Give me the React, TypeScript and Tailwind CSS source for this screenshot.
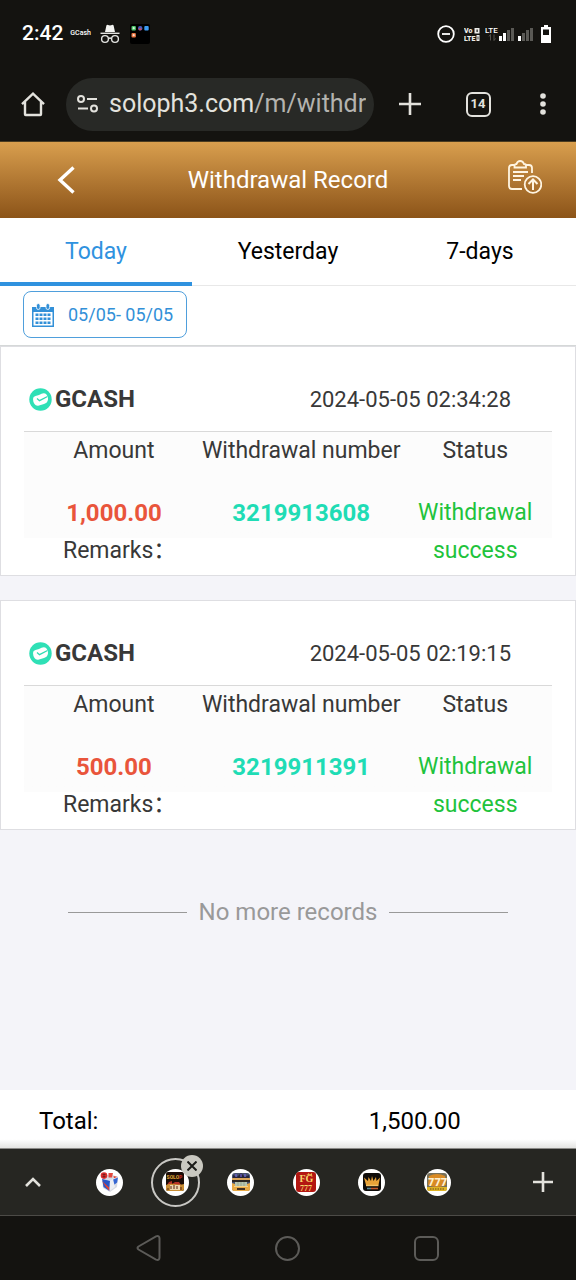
import type { ReactNode } from "react";

interface WithdrawalRecord {
  id: string;
  time: string;
  amount: string;
  status: string;
}

const records: WithdrawalRecord[] = [
  { id: "3219913608", time: "2024-05-05 02:34:28", amount: "1,000.00", status: "Withdrawal success" },
  { id: "3219911391", time: "2024-05-05 02:19:15", amount: "500.00", status: "Withdrawal success" },
];

const ranges = ["Today", "Yesterday", "7-days"];

function StatusBar() {
  return (
    <div className="flex h-[67px] items-center pl-[22px] pr-[25px] text-white">
      <span className="text-[21px] font-medium">2:42</span>
      <span className="ml-[7px] w-5 text-[7px] font-medium">GCash</span>
      <svg className="ml-[10px] h-5 w-5" viewBox="0 0 20 20" fill="none" stroke="#e4e4e2" strokeWidth="1.4">
        <path d="M5 8 6.4 1.4Q7 .6 8 1l2 .6L12 1q1-.4 1.6.4L15 8Z" fill="#f4f4f2" stroke="none" />
        <path d="M.5 9.3h19" />
        <circle cx="5" cy="15" r="3.4" />
        <circle cx="15" cy="15" r="3.4" />
        <path d="M8.4 14.6q1.6-1.2 3.2 0" />
      </svg>
      <svg className="ml-[10px] h-5 w-5" viewBox="0 0 20 20">
        <rect width="20" height="20" rx="2" fill="#000" />
        <rect x="1.5" y="2" width="4.4" height="4.4" rx="1" fill="#4fc56b" />
        <circle cx="3.7" cy="4.2" r="1.1" fill="#d8f4de" />
        <rect x="8" y="2" width="4.4" height="4.4" rx="2" fill="#4658b8" />
        <path d="M8.5 4.6h3.4l-.8 1.6H9z" fill="#d84b54" />
        <rect x="14.3" y="2" width="4.4" height="4.4" rx="1" fill="#3c9bf2" />
        <rect x="1.5" y="9" width="4.4" height="4.4" rx="1" fill="#e8743f" />
        <circle cx="3.7" cy="11.2" r="1.1" fill="#f8ddd0" />
      </svg>

      <div className="ml-auto flex items-center">
        <svg className="h-[18px] w-[18px]" viewBox="0 0 18 18" fill="none" stroke="#fff" strokeWidth="1.8">
          <circle cx="9" cy="9" r="7.8" />
          <path d="M5 9h8" />
        </svg>
        <svg className="ml-[9px] h-4 w-4" viewBox="0 0 16 16" fill="#ecece9" fontSize="7" fontWeight="900">
          <text x="0" y="7">Vo</text>
          <text x="0" y="15">LTE</text>
          <path d="M10.5 2h5v5.500h-5zM12.500 3.600v2.300h1.200V3.600zM12.500 9h3v6h-3zM13.600 10.500v3h.8v-3z" fillRule="evenodd" />
        </svg>
        <svg className="ml-[5px] h-[18px] w-12" viewBox="0 0 48 18">
          <text x="0" y="8" fontSize="8" fontWeight="500" fill="#fff">LTE</text>
          <path d="M5.5 9.5v6M4 11.500l1.500-2M9 9.500v6M9 15.500l1.500-2" stroke="#55534f" fill="none" />
          <path d="M14 11h3v5h-3zM18 8h3v8h-3zM33 11h3v5h-3z" fill="#fff" />
          <path d="M22 5h3v11h-3zM26 3h3v13h-3zM37 8h3v8h-3zM41 5h3v11h-3zM45 3h3v13h-3z" fill="#5a5955" />
        </svg>
        <svg className="ml-2 h-[18px] w-[10px]" viewBox="0 0 10 18" fill="#fff">
          <path d="M3 0h4v2h3v16H0V2h3zM2 4.500v5.500h6V4.500z" fillRule="evenodd" />
        </svg>
      </div>
    </div>
  );
}

function BrowserBar() {
  return (
    <div className="flex h-[74px] items-center text-[#e3e2dd]">
      <button aria-label="Home" className="flex w-[66px] justify-center">
        <svg className="h-[26px] w-[26px]" viewBox="0 0 26 26" fill="none" stroke="currentColor" strokeWidth="2.4">
          <path d="M2 13.200 13 2.600l11 10.600" />
          <path d="M5 11v12.300q0 .7.7.7h14.600q.7 0 .7-.7V11" />
        </svg>
      </button>
      <button className="flex h-[53px] min-w-0 flex-1 items-center rounded-full bg-[#282926] pl-[11px] pr-[6px]">
        <svg className="h-5 w-[21px] shrink-0" viewBox="0 0 21 20" fill="none" stroke="currentColor" strokeWidth="2">
          <circle cx="4" cy="5" r="3" />
          <path d="M10 5h10M1 14.500h10" />
          <circle cx="17" cy="14.5" r="3" />
        </svg>
        <span className="ml-[11px] overflow-hidden whitespace-nowrap text-[25px]">
          soloph3.com<span className="text-[#b4b3af]">/m/withdr</span>
        </span>
      </button>
      <button aria-label="New tab" className="flex w-[72px] justify-center">
        <svg className="h-[22px] w-[22px]" viewBox="0 0 22 22" stroke="currentColor" strokeWidth="2.6">
          <path d="M11 0v22M0 11h22" />
        </svg>
      </button>
      <button aria-label="Open tabs" className="flex w-16 justify-center">
        <span className="flex h-[25px] w-[25px] items-center justify-center rounded-md border-2 border-current text-[13px] font-bold">
          14
        </span>
      </button>
      <button aria-label="Menu" className="flex w-[66px] justify-center">
        <svg className="h-[22px] w-[6px]" viewBox="0 0 6 22" fill="currentColor">
          <circle cx="3" cy="3" r="2.8" />
          <circle cx="3" cy="11" r="2.8" />
          <circle cx="3" cy="19" r="2.8" />
        </svg>
      </button>
    </div>
  );
}

function PageHeader() {
  return (
    <header className="flex h-[77px] items-center border-t border-[#4a3b20] bg-linear-to-b from-[#d99f4e] to-[#8c5418] text-white">
      <button aria-label="Back" className="flex w-[132px] justify-center">
        <svg className="h-7 w-[18px]" viewBox="0 0 18 28" fill="none" stroke="currentColor" strokeWidth="3.4">
          <path d="M16.500 1.500 3 14l13.500 12.500" />
        </svg>
      </button>
      <h1 className="flex-1 text-center text-[24px]">Withdrawal Record</h1>
      <button aria-label="Withdraw" className="flex w-[132px] justify-end pb-[6px] pr-[34px]">
        <svg className="h-[34px] w-[34px]" viewBox="0 0 34 34" fill="none" stroke="#fff5e2" strokeWidth="1.8">
          <path d="M6 5H4Q1 5 1 8v18q0 3 3 3h10M18 5h3q3 0 3 3v5" />
          <path d="M6.500 7.500V5.500Q6.500 4 8.500 4 9.500 1 12.200 1T16 4q2 0 2 1.500v2z" />
          <path d="M5 12h15M5 16h11M5 20h8" />
          <circle cx="25" cy="24.5" r="8.3" />
          <path d="M25 30V20M20.500 24l4.500-4.500 4.500 4.500" strokeWidth="2" />
        </svg>
      </button>
    </header>
  );
}

function RangeTabs() {
  return (
    <nav className="grid grid-cols-3 border-b border-[#e8e8e8] bg-white">
      {ranges.map((label, i) => (
        <button
          key={label}
          className={`-mb-px h-[68px] border-b-4 pt-1 text-[23px] ${
            i === 0 ? "border-[#2f92df] text-[#2f92df]" : "border-transparent text-black"
          }`}
        >
          {label}
        </button>
      ))}
    </nav>
  );
}

function DateFilter() {
  return (
    <div className="border-b border-[#d5d8d8] bg-white px-[23px] pb-[7px] pt-[5px]">
      <button className="flex h-[47px] items-center rounded-lg border border-[#4f9fdc] pl-2 pr-[13px] text-[18px] text-[#3290d8]">
        <svg className="mr-[14px] h-6 w-[22px]" viewBox="0 0 22 24" fill="currentColor">
          <path d="M0 4h22v20H0zM1.500 9v13.500h19V9z" fillRule="evenodd" />
          <g stroke="#fff" strokeWidth=".8">
            <rect x="4.5" y=".5" width="3.6" height="6" rx="1.8" />
            <rect x="14" y=".5" width="3.6" height="6" rx="1.8" />
          </g>
          <path d="M7.500 10.500h3v2.500h-3zM11.500 10.500h3v2.500h-3zM15.500 10.500h3v2.500h-3zM3.500 14.500h3V17h-3zM7.500 14.500h3V17h-3zM11.500 14.500h3V17h-3zM15.500 14.500h3V17h-3zM3.500 18.500h3V21h-3zM7.500 18.500h3V21h-3zM11.500 18.500h3V21h-3zM3.500 10.500h3v2.500h-3zM15.500 18.500h3V21h-3z" />
        </svg>
        05/05- 05/05
      </button>
    </div>
  );
}

function RecordCard({ record }: { record: WithdrawalRecord }) {
  return (
    <article className="border border-[#dedee2] bg-white px-[23px] pb-[5px] pt-5 text-[#383838]">
      <div className="flex h-[65px] items-center border-b border-[#d9d9d9] pl-[5px] pr-[41px]">
        <svg className="h-[23px] w-[23px]" viewBox="0 0 23 23">
          <circle cx="11.5" cy="11.5" r="11.2" fill="#2fe0b6" />
          <path d="M4 11q0-2.500 2.500-3L10 7q5-3 7.500-.5 1.800 2 1.500 5-.5 3.500-4 4.500l-5 1.500q-3 .8-4.500-1.500T4 11z" fill="#fff" />
          <path d="m8 10.500 2.500 2.200L18.500 8.500" fill="none" stroke="#2fdcb3" strokeWidth="1.3" />
        </svg>
        <h2 className="ml-[3px] text-[24px] font-bold">GCASH</h2>
        <time className="ml-auto text-[22px]">{record.time}</time>
      </div>
      <table className="w-full table-fixed bg-linear-to-b from-[#fcfcfc] from-77% to-white to-77% text-center text-[23px] leading-[38px]">
        <thead>
          <tr>
            <th className="w-[33.5%] pb-6 pl-[3px] font-normal">Amount</th>
            <th className="whitespace-nowrap pb-6 font-normal">Withdrawal number</th>
            <th className="w-[28.5%] pb-6 pr-[3px] font-normal">Status</th>
          </tr>
        </thead>
        <tbody>
          <tr>
            <td className="pl-[3px] text-[24px] font-bold text-[#e9553b]">{record.amount}</td>
            <td className="text-[24px] font-bold text-[#1fdcb5]">{record.id}</td>
            <td rowSpan={2} className="pl-2 pr-[11px] text-[#1fc33c]">
              {record.status}
            </td>
          </tr>
          <tr>
            <td colSpan={2} className="pl-[39px] text-left">
              Remarks：
            </td>
          </tr>
        </tbody>
      </table>
    </article>
  );
}

function CubeIcon() {
  return (
    <svg className="h-5 w-5" viewBox="0 0 20 20">
      <path d="M2 6l8-4 8 3-1 10-7 5-7-4z" fill="#d7dae3" />
      <path d="M2 6.500l8 2L9.500 19 3.500 15z" fill="#2a55c6" />
      <path d="M10 8.500l8-3.500-.8 5.500-4.700 3.500z" fill="#3566d2" />
      <path d="M2 9l4 6 3.500 4-.2-3.500zM13.500 4l4.500 1-4 1.600z" fill="#e24332" />
      <path d="M10 8.500l3-1.500 2 8-5.500 4z" fill="#eceef3" />
      <path d="M2 6.500l8 2 8-3.500" fill="none" stroke="#f4f5f8" strokeWidth=".7" />
      <circle cx="4" cy="3.6" r="3.3" fill="#dd2c2c" />
      <path d="M2.500 2.500h3M2.500 4.600h3M4 1.400v4.400" stroke="#5b1d1d" strokeWidth=".7" />
      <path d="M8.500 1h4.500l-1 4.500H8.500z" fill="#e2473e" />
    </svg>
  );
}

function SoloIcon() {
  return (
    <svg className="h-5 w-5" viewBox="0 0 20 20">
      <rect x="1" width="18" height="19" rx="2" fill="#1b0d08" />
      <text x="1.5" y="7" fontSize="5" fontWeight="900" fill="#d79b32">
        SOLO<tspan fill="#c22e26">P</tspan>
      </text>
      <path d="M4 10l3-1v3l3-2 4 0 2 3H2z" fill="#b53327" />
      <path d="M1 13q4-2 9-1t9 0v5q0 2-2 2H3q-2 0-2-2z" fill="#c98e34" />
      <path d="M5 13h10v5H5z" fill="#ecd8b0" />
      <path d="M6 14v3M9 13v4M12 14v3M3 16v2M16 15v3" stroke="#5a2412" />
    </svg>
  );
}

function SlotIcon() {
  return (
    <svg className="h-5 w-5" viewBox="0 0 20 20">
      <rect x="1" y="1" width="18" height="18" rx="3" fill="#46506e" />
      <path d="M2 3l4 2 4-4 4 4 4-2v3H2z" fill="#262338" />
      <path d="M5 2v3M10 2v3M14 2v3" stroke="#7b6cf0" />
      <rect x="1" y="6" width="18" height="2" fill="#d9a45a" />
      <rect x="1" y="8" width="18" height="2" fill="#2b2622" />
      <rect x="4" y="10" width="12" height="4" fill="#b7c5b0" />
      <path d="M7 10v4M10 10v4M13 10v4" stroke="#8d9c82" strokeWidth=".7" />
      <path d="M1 11l3 1v2h12v-2l3-1v6q0 2-2 2H3q-2 0-2-2z" fill="#e9aa45" />
      <path d="M3 14.500h14" stroke="#f7d489" />
      <path d="M6 17h8" stroke="#433122" strokeWidth="2" />
    </svg>
  );
}

function Fg777Icon() {
  return (
    <svg className="h-5 w-5" viewBox="0 0 20 20" fill="#f6d66c" fontFamily="Liberation Serif, serif" fontWeight="700">
      <rect x="0" y="0" width="20" height="20" rx="3" fill="#b31712" />
      <text x="3.5" y="10" fontSize="10">FG</text>
      <text x="4" y="18.5" fontSize="8">777</text>
      <path d="M10 3l1.500-.500L12.500 1l1.500 1.500L16 1v2.500z" fill="#f1b64c" />
    </svg>
  );
}

function CrownIcon() {
  return (
    <svg className="h-5 w-5" viewBox="0 0 20 20">
      <rect x="1" y="1" width="18" height="18" rx="3" fill="#0f0c0a" />
      <path d="M4 13 2 5.500l4 3.500.5-4L9 9l1-5 1.500 5L14 5l.5 4L18 5.500 16.500 13z" fill="#e9a338" />
      <path d="M4 13.500h12.500" stroke="#f4c469" strokeWidth="1.4" />
      <path d="M5 16.500h4" stroke="#5d8d99" strokeWidth="1.6" />
      <path d="M9 16.500h7" stroke="#c65a2b" strokeWidth="1.6" />
    </svg>
  );
}

function Lucky7Icon() {
  return (
    <svg className="h-5 w-5" viewBox="0 0 20 20" fontWeight="900">
      <rect x="0" y="1" width="20" height="18" rx="3" fill="#76705a" />
      <path d="M0 15h20v2q0 2-2 2H2q-2 0-2-2z" fill="#dfb425" />
      <path d="M2 4q8-4 16 0l1 9q-9 4-18 0z" fill="#d98a24" />
      <text x="1" y="13.5" fontSize="11" fill="#fdf0cf">777</text>
      <path d="M3 17h14" stroke="#6b4d16" strokeDasharray="1.5 1" />
    </svg>
  );
}

const openTabs: { name: string; icon: ReactNode; active?: boolean }[] = [
  { name: "Cube", icon: <CubeIcon /> },
  { name: "Solo", icon: <SoloIcon />, active: true },
  { name: "Slots", icon: <SlotIcon /> },
  { name: "FG777", icon: <Fg777Icon /> },
  { name: "Crown", icon: <CrownIcon /> },
  { name: "777", icon: <Lucky7Icon /> },
];

function TabStrip() {
  return (
    <div className="flex h-[68px] items-center border-b border-t border-b-[#4c4b47] border-t-[#8b8a87] bg-[#262622] text-[#e3e2dd]">
      <button aria-label="Show tabs" className="flex w-[66px] justify-center">
        <svg className="h-[10px] w-4" viewBox="0 0 16 10" fill="none" stroke="currentColor" strokeWidth="2.6">
          <path d="M1 9l7-7 7 7" />
        </svg>
      </button>
      <div className="grid flex-1 grid-cols-6 justify-items-center pl-[11px] pr-10">
        {openTabs.map((tab) => (
          <div key={tab.name} className="relative flex h-[49px] w-[49px] items-center justify-center">
            {tab.active && <span className="absolute inset-0 rounded-full border-2 border-[#c9c8c4]" />}
            <button
              aria-label={tab.name}
              className="flex h-[27px] w-[27px] items-center justify-center rounded-full bg-white"
            >
              {tab.icon}
            </button>
            {tab.active && (
              <button
                aria-label="Close tab"
                className="absolute -right-[3px] -top-[3px] flex h-[22px] w-[22px] items-center justify-center rounded-full bg-[#c9c8c0]"
              >
                <svg className="h-[10px] w-[10px]" viewBox="0 0 10 10" stroke="#1b1b18" strokeWidth="2">
                  <path d="m.5.5 9 9M9.500.5l-9 9" />
                </svg>
              </button>
            )}
          </div>
        ))}
      </div>
      <button aria-label="Add tab" className="flex w-[66px] justify-center">
        <svg className="h-5 w-5" viewBox="0 0 20 20" stroke="currentColor" strokeWidth="2.6">
          <path d="M10 0v20M0 10h20" />
        </svg>
      </button>
    </div>
  );
}

function SystemNav() {
  return (
    <div className="grid h-16 grid-cols-3 items-center justify-items-center px-20 text-[#5c5b58]">
      <button aria-label="System back">
        <svg className="h-[26px] w-[26px]" viewBox="0 0 26 26" fill="none" stroke="currentColor" strokeWidth="2">
          <path d="M2.500 11.500 20 1.400q3.500-1.200 3.500 2v19.200q0 3.200-3.500 2L2.500 14.500q-2-1.500 0-3z" />
        </svg>
      </button>
      <button aria-label="System home" className="h-[25px] w-[25px] rounded-full border-2 border-current" />
      <button aria-label="Recent apps" className="h-[25px] w-[25px] rounded-md border-2 border-current" />
    </div>
  );
}

export default function App() {
  return (
    <div className="flex min-h-screen flex-col bg-[#141310] font-[Roboto,'Noto_Sans_CJK_SC',sans-serif]">
      <StatusBar />
      <BrowserBar />
      <PageHeader />
      <RangeTabs />
      <DateFilter />
      <main className="flex-1 bg-[#f4f4f9]">
        <div className="flex flex-col gap-6">
          {records.map((record) => (
            <RecordCard key={record.id} record={record} />
          ))}
        </div>
        <div className="flex items-center gap-3 px-[68px] pt-16 text-[24px] text-[#999]">
          <span className="h-px flex-1 bg-[#999]" />
          No more records
          <span className="h-px flex-1 bg-[#999]" />
        </div>
      </main>
      <footer className="grid h-[58px] grid-cols-2 items-center bg-linear-to-b from-white from-85% to-[#e4e4e2] pl-[39px] pr-9 pt-[3px] text-[24px] text-black">
        <span>Total:</span>
        <span className="text-center">1,500.00</span>
      </footer>
      <TabStrip />
      <SystemNav />
    </div>
  );
}
